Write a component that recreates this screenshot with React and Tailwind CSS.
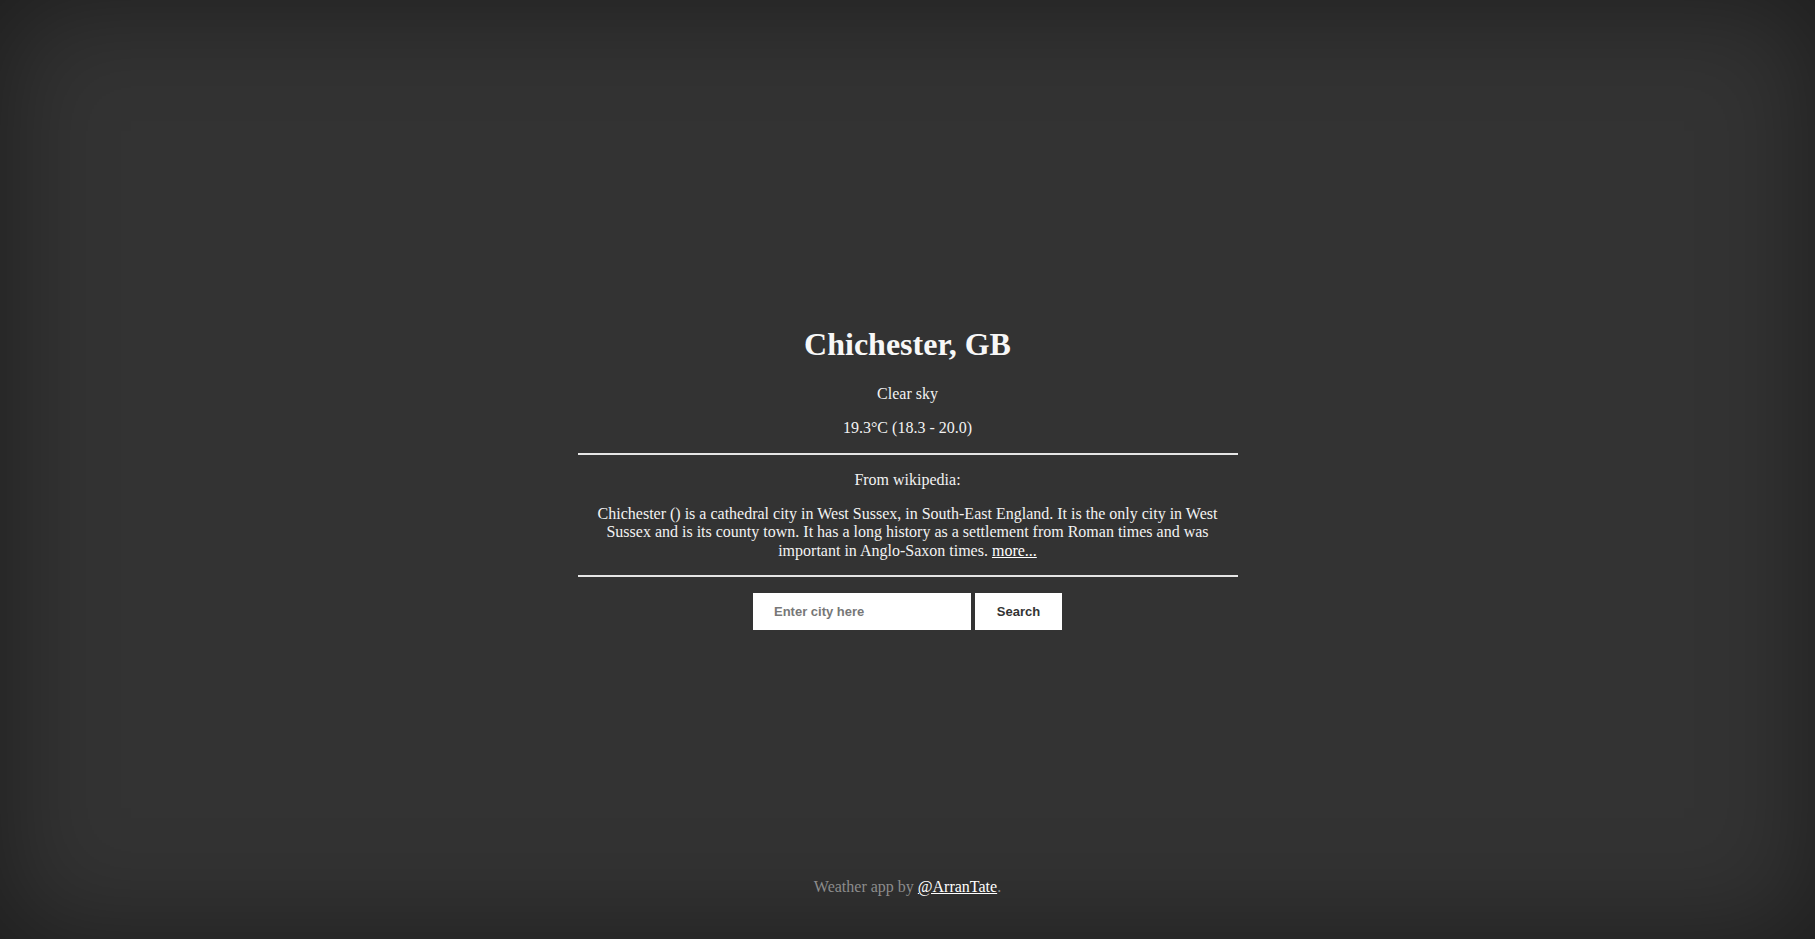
import { useState } from "react";

const App = () => {
  const [city, setCity] = useState("");

  const weather = {
    name: "Chichester, GB",
    description: "Clear sky",
    temp: "19.3",
    min: "18.3",
    max: "20.0",
  };

  const summary =
    "Chichester () is a cathedral city in West Sussex, in South-East England. It is the only city in West Sussex and is its county town. It has a long history as a settlement from Roman times and was important in Anglo-Saxon times.";

  return (
    <div
      className="h-[939px] w-full flex flex-col bg-[#333333] text-white shadow-[inset_0_0_110px_rgba(0,0,0,0.45)]"
      style={{ fontFamily: '"Liberation Serif", "Times New Roman", serif' }}
    >
      <div className="flex-1 flex flex-col items-center pt-[326px]">
        <div className="w-[660px] flex flex-col items-center text-center">
          <h1 className="text-[32px] leading-[37px] font-bold text-[#f7f7f7]">{weather.name}</h1>
          <p className="mt-[22px] text-[16px] leading-[18px] text-[#f2f2f2]">{weather.description}</p>
          <p className="mt-[16px] text-[16px] leading-[18px] text-[#f2f2f2]">
            {weather.temp}°C ({weather.min} - {weather.max})
          </p>

          {/* wikipedia */}
          <div className="mt-[16px] w-full border-y-2 border-[#e6e6e6] pt-[16px] pb-[15px]">
            <p className="text-[16px] leading-[18px] text-[#f2f2f2]">From wikipedia:</p>
            <p className="mt-[16px] px-[15px] text-[16px] leading-[18.4px] text-[#f2f2f2]">
              {summary}{" "}
              <a href="#" className="underline text-white">
                more...
              </a>
            </p>
          </div>

          <form
            className="mt-[16px] flex gap-[4px]"
            style={{ fontFamily: '"Liberation Sans", Arial, sans-serif' }}
            onSubmit={(e) => e.preventDefault()}
          >
            <input
              type="text"
              value={city}
              onChange={(e) => setCity(e.target.value)}
              placeholder="Enter city here"
              className="w-[218px] h-[37px] bg-white pl-[21px] pr-2 text-[13px] font-bold text-[#333] placeholder:text-[#777] outline-none"
            />
            <button
              type="submit"
              className="w-[87px] h-[37px] bg-white text-[13px] font-bold text-[#333]"
            >
              Search
            </button>
          </form>
        </div>
      </div>

      <footer className="pb-[43px] text-center text-[16px] leading-[18px] text-[#8c8c8c]">
        Weather app by{" "}
        <a href="#" className="underline text-white">
          @ArranTate
        </a>
        .
      </footer>
    </div>
  );
};

export default App;
